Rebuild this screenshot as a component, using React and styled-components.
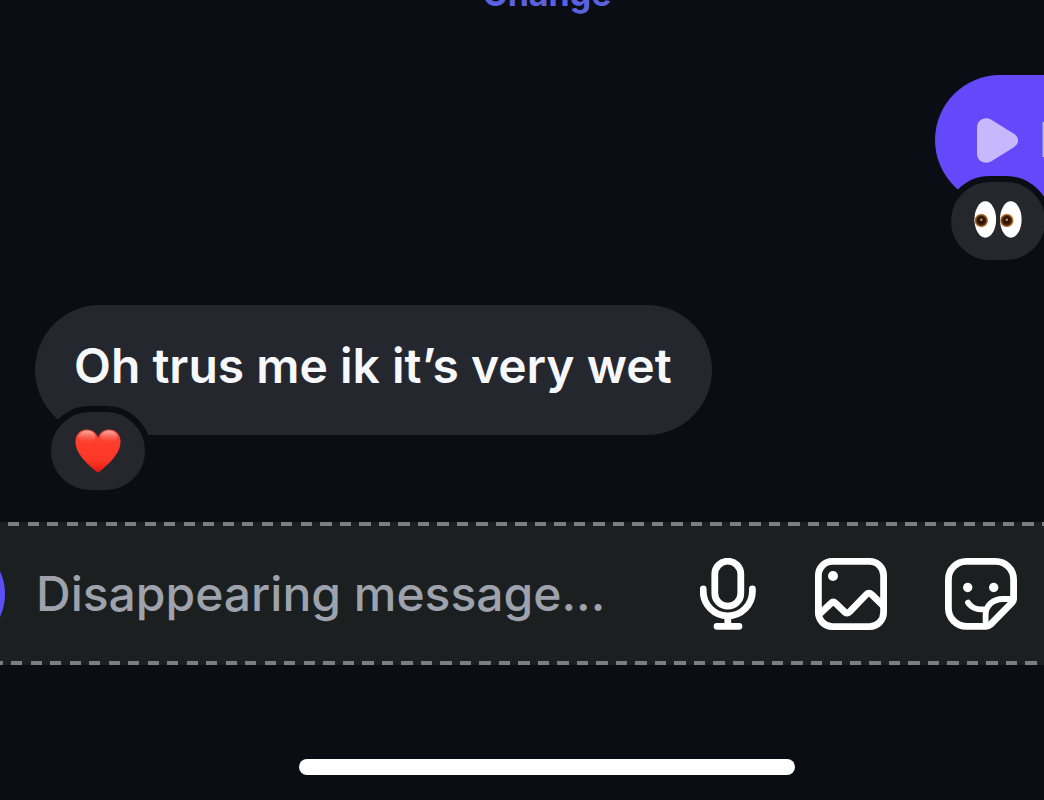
import React from "react";
import styled, { createGlobalStyle } from "styled-components";

const GlobalStyle = createGlobalStyle`
  * { box-sizing: border-box; }
  body {
    margin: 0;
    background: #0a0d14;
    overflow: hidden;
    font-family: Inter, "Liberation Sans", sans-serif;
  }
  button, input { font: inherit; color: inherit; border: 0; background: none; padding: 0; margin: 0; }
`;

const Viewport = styled.div`
  height: 100vh;
  overflow: hidden;
  background: #0a0d14;
`;

const Screen = styled.main`
  display: flex;
  flex-direction: column;
  width: calc(100% + 50px);
`;

const ChangeLink = styled.button`
  align-self: center;
  margin-top: -26px;
  font-size: 34px;
  font-weight: 700;
  line-height: 40px;
  color: #5a62e0;
`;

const Thread = styled.section`
  display: flex;
  flex-direction: column;
  gap: 100px;
  padding: 61px 0 87px 35px;
`;

const Bubble = styled.div`
  position: relative;
  display: flex;
  align-items: center;
  flex: none;
  height: 130px;
  border-radius: 65px;
  font-size: 48px;
  line-height: 58px;
  white-space: nowrap;
  font-weight: 600;
`;

const Incoming = styled(Bubble)`
  align-self: flex-start;
  padding: 0 40px 8px 39px;
  background: #25272f;
  color: #f7f8fc;
`;

const Outgoing = styled(Bubble)`
  align-self: flex-end;
  width: 294px;
  margin-right: -135px;
  padding-left: 42px;
  gap: 20px;
  background: #6548fa;
  color: #c5b8fd;
`;

const Reaction = styled.button`
  position: absolute;
  left: 10px;
  top: 101px;
  display: grid;
  place-items: center;
  width: 106px;
  height: 90px;
  border: 6px solid #0a0d14;
  border-radius: 45px;
  background: #25272d;
`;

const Composer = styled.form`
  display: flex;
  flex-direction: column;
  background: #1b1f20;
`;

const Dashes = styled.div`
  height: 4px;
  background: repeating-linear-gradient(90deg, #7a7e7f 0 11px, transparent 11px 19.5px);
  background-position-x: ${(p) => p.$shift}px;
`;

const Controls = styled.div`
  display: flex;
  align-items: center;
  height: 135px;
  padding-right: 77px;
  gap: 58px;
`;

const CameraButton = styled.button`
  flex: none;
  width: 110px;
  height: 110px;
  margin-left: -105px;
  margin-right: -27px;
  border-radius: 50%;
  background: #5a50f5;
`;

const MessageInput = styled.input`
  flex: 1;
  min-width: 0;
  height: 64px;
  font-size: 48px;
  font-weight: 500;
  color: #f7f8fc;
  outline: 0;
  &::placeholder { color: #9da2ac; opacity: 1; }
`;

const IconButton = styled.button`
  display: flex;
  flex: none;
`;

const HomeIndicator = styled.div`
  align-self: center;
  width: 496px;
  height: 16px;
  margin-top: 94px;
  border-radius: 8px;
  background: #fff;
`;

const strokeProps = {
  fill: "none",
  stroke: "#fff",
  strokeWidth: 6.8,
  strokeLinecap: "round",
  strokeLinejoin: "round",
};

const MicIcon = () => (
  <svg width="57" height="72" viewBox="0 0 57 72" {...strokeProps}>
    <rect x="14.8" y="3.2" width="26" height="45" rx="13" />
    <path d="M3.2 31v2.3a24.6 24.6 0 0 0 49.2 0V31M27.8 58v10M17 68.3h22" />
  </svg>
);

const PhotoIcon = () => (
  <svg width="72" height="72" viewBox="0 0 72 72" {...strokeProps}>
    <rect x="3.4" y="3.4" width="65.2" height="65.2" rx="14" />
    <circle cx="18" cy="18" r="5" fill="#fff" stroke="none" />
    <path d="M4 56.5 16 45.3Q18.3 43 20.6 45.3L30 54.2Q32.3 56 34.6 53.8L51.3 36.5Q54 34 56.7 36.5L68 47.5" />
  </svg>
);

const StickerIcon = () => (
  <svg width="72" height="72" viewBox="0 0 72 72" {...strokeProps}>
    <path d="M41 68.3H21.4a18 18 0 0 1-18-18V21.4a18 18 0 0 1 18-18h29.2a18 18 0 0 1 18 18V41Q68.6 43 67 44.7L45.5 66.5Q43.5 68.3 41 68.3" />
    <path d="M40.6 67.5V57C40.6 47 48.5 41 58 41h9.5M23 44.6c3.4 5.2 10 7.8 17.5 6.4" strokeWidth="5.8" />
    <circle cx="22.7" cy="29.5" r="4.7" fill="#fff" stroke="none" />
    <circle cx="48.7" cy="29.5" r="4.7" fill="#fff" stroke="none" />
  </svg>
);

const PlayIcon = () => (
  <svg width="42" height="45" viewBox="0 0 42 45" fill="#c5b8fd">
    <path d="M0 9.5C0 2 7.5-2 14 1.5L36.5 15.5C42.7 19.5 42.7 25.5 36.5 29.5L14 43.5C7.5 47 0 43 0 35.5Z" />
  </svg>
);

const HeartEmoji = () => (
  <svg width="46" height="44" viewBox="0 0 46 44">
    <defs>
      <linearGradient id="heartFill" x1="0" y1="0" x2="0" y2="1">
        <stop offset="0" stopColor="#f04a3a" />
        <stop offset="0.35" stopColor="#ff3c2b" />
        <stop offset="0.75" stopColor="#fb3626" />
        <stop offset="1" stopColor="#dc160e" />
      </linearGradient>
      <linearGradient id="heartShine" x1="0" y1="0" x2="0" y2="1">
        <stop offset="0" stopColor="#ffc5bb" stopOpacity="0.85" />
        <stop offset="1" stopColor="#ff5545" stopOpacity="0" />
      </linearGradient>
    </defs>
    <path d="M23 43.5C21.5 43 15 37.5 8.5 30.5C3.5 24.5 0.5 19 0.5 12.5C0.5 5 5.5 0.5 12 0.5C17 0.5 21 3.3 23 8.5C25 3.3 29 0.5 34 0.5C40.5 0.5 45.5 5 45.5 12.5C45.5 19 42.5 24.5 37.5 30.5C31 37.5 24.5 43 23 43.5Z" fill="url(#heartFill)" />
    <ellipse cx="12" cy="8" rx="8.5" ry="6.5" fill="url(#heartShine)" />
    <ellipse cx="34" cy="8" rx="8.5" ry="6.5" fill="url(#heartShine)" />
  </svg>
);

const EyesEmoji = () => (
  <svg width="48" height="40" viewBox="0 0 48 40">
    <defs>
      <radialGradient id="iris">
        <stop offset="0" stopColor="#240d02" />
        <stop offset="0.6" stopColor="#3b1804" />
        <stop offset="0.85" stopColor="#9a6428" />
        <stop offset="1" stopColor="#d9b078" />
      </radialGradient>
    </defs>
    {[0, 25.5].map((x) => (
      <g key={x} transform={`translate(${x} 0)`}>
        <ellipse cx="11.3" cy="18.5" rx="10.8" ry="18.2" fill="#fff" />
        <circle cx="7.3" cy="19.5" r="6.8" fill="url(#iris)" />
        <circle cx="7.3" cy="18.8" r="1.2" fill="#b99a85" />
      </g>
    ))}
  </svg>
);

export default function App() {
  return (
    <Viewport>
      <GlobalStyle />
      <Screen>
        <ChangeLink type="button">Change</ChangeLink>
        <Thread>
          <Outgoing>
            <PlayIcon />
            <span>Photo</span>
            <Reaction type="button" aria-label="Eyes reaction"><EyesEmoji /></Reaction>
          </Outgoing>
          <Incoming>
            <span>Oh trus me ik it’s very wet</span>
            <Reaction type="button" aria-label="Heart reaction"><HeartEmoji /></Reaction>
          </Incoming>
        </Thread>
        <Composer onSubmit={(e) => e.preventDefault()}>
          <Dashes $shift={-11} />
          <Controls>
            <CameraButton type="button" aria-label="Camera" />
            <MessageInput aria-label="Message" placeholder="Disappearing message..." />
            <IconButton type="button" aria-label="Record voice message"><MicIcon /></IconButton>
            <IconButton type="button" aria-label="Send a photo"><PhotoIcon /></IconButton>
            <IconButton type="button" aria-label="Stickers"><StickerIcon /></IconButton>
          </Controls>
          <Dashes $shift={-8} />
        </Composer>
        <HomeIndicator />
      </Screen>
    </Viewport>
  );
}
